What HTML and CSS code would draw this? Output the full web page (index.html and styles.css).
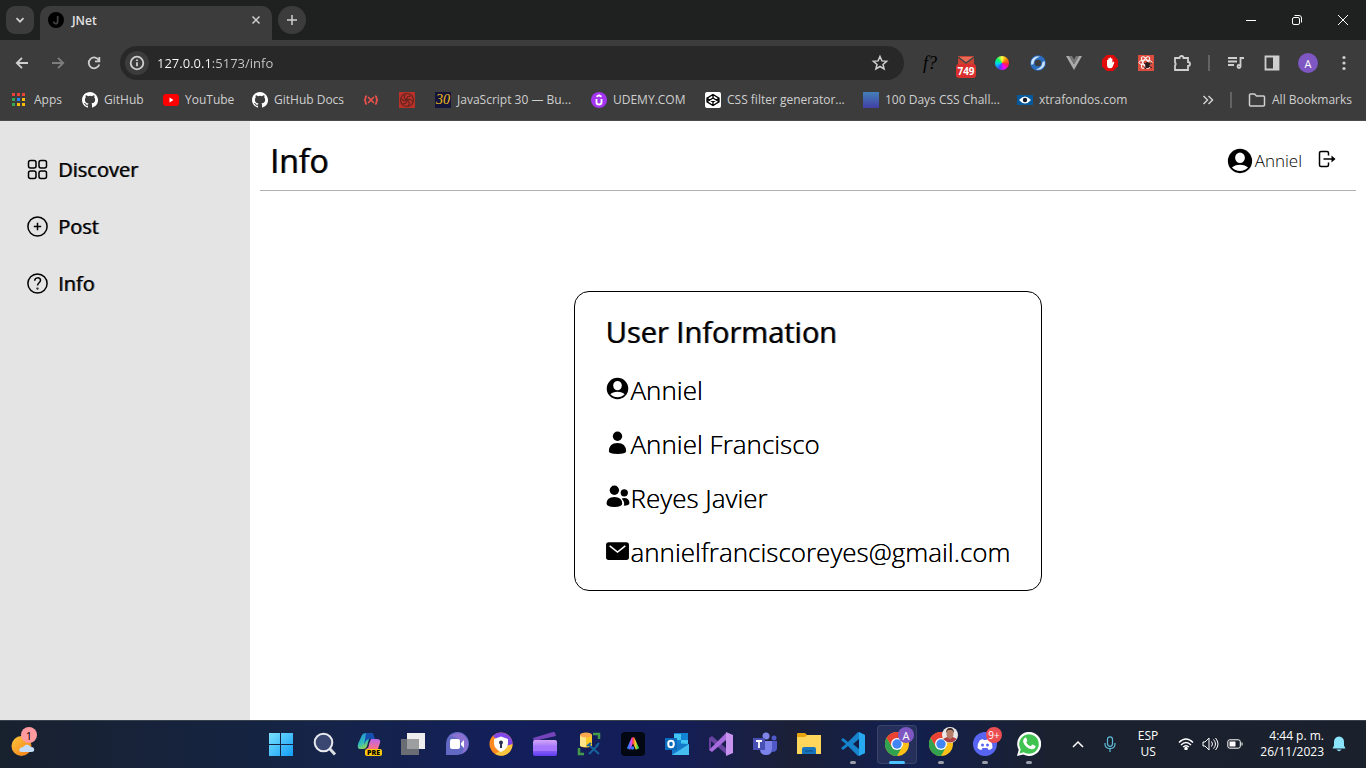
FILE: index.html
```html
<!DOCTYPE html>
<html lang="en">
<head>
<meta charset="utf-8">
<meta name="viewport" content="width=device-width, initial-scale=1">
<title>JNet</title>
<link rel="stylesheet" href="styles.css">
</head>
<body>
<header class="browser">
  <div class="tabstrip">
    <button class="tab-search" aria-label="Search tabs"><svg width="10" height="10" viewBox="0 0 10 10" class="line bold"><path d="M1.5 3.2 5 6.7l3.5-3.5"/></svg></button>
    <div class="tab">
      <svg width="16" height="16" viewBox="0 0 16 16"><circle cx="8" cy="8" r="8" fill="#000"/><path d="M9.7 4v5.4c0 3-4 3-4 .2" fill="none" stroke="#404040" stroke-width="1.8"/></svg>
      <span class="tab-title">JNet</span>
      <button class="tab-close" aria-label="Close tab"><svg width="10" height="10" viewBox="0 0 10 10" class="line"><path d="m1.5 1.5 7 7m0-7-7 7"/></svg></button>
    </div>
    <button class="new-tab" aria-label="New tab"><svg width="12" height="12" viewBox="0 0 12 12" class="line"><path d="M6 1v10M1 6h10"/></svg></button>
    <div class="window-controls">
      <button aria-label="Minimize"><svg width="12" height="12" viewBox="0 0 12 12" class="line thin"><path d="M1 6.5h10"/></svg></button>
      <button aria-label="Restore"><svg width="12" height="12" viewBox="0 0 12 12" class="line thin"><rect x="1.5" y="3.5" width="7" height="7" rx="1.5"/><path d="M3.5 1.5H8A2.5 2.5 0 0 1 10.5 4v4.500"/></svg></button>
      <button aria-label="Close"><svg width="12" height="12" viewBox="0 0 12 12" class="line thin"><path d="m1 1 10 10M11 1 1 11"/></svg></button>
    </div>
  </div>

  <div class="toolbar">
    <div class="tools">
      <button aria-label="Back"><svg width="16" height="16" viewBox="0 0 16 16" class="line bold"><path d="M14 8H3m5-5.200L2.800 8 8 13.200"/></svg></button>
      <button class="dim" aria-label="Forward"><svg width="16" height="16" viewBox="0 0 16 16" class="line bold"><path d="M2 8h11M8 2.800 13.200 8 8 13.200"/></svg></button>
      <button aria-label="Reload"><svg width="16" height="16" viewBox="0 0 16 16" class="line bold"><path d="M13 5.500A5.400 5.400 0 1 0 13.300 9.500"/><path d="M13.300 2v4.300H9"/></svg></button>
    </div>
    <div class="address">
      <button class="site-info" aria-label="Site information"><svg width="16" height="16" viewBox="0 0 16 16" class="line bold"><circle cx="8" cy="8" r="6.300"/><path d="M8 7.300v4M8 4.500v1.500"/></svg></button>
      <input class="url" type="text" aria-label="Address" value="127.0.0.1:5173/info">
      <button class="star" aria-label="Bookmark this tab"><svg width="18" height="18" viewBox="0 0 18 18" class="line"><path d="m9 2.500 1.900 4.400 4.700.4-3.600 3.100 1.100 4.600L9 12.500 4.900 15 6 10.400 2.400 7.300l4.700-.4z"/></svg></button>
    </div>
    <div class="tools">
      <button class="font-finder" aria-label="Font finder"><i>f?</i></button>
      <button class="mail" aria-label="Mail, 749 unread"><svg width="18" height="14" viewBox="0 0 18 14"><path fill="#c74332" d="M1 0h16v14H1z"/><path d="m1 1 8 6 8-6" fill="#e86a58" stroke="#444" stroke-width="1.500"/></svg><span class="mail-count">749</span></button>
      <button aria-label="Color picker"><span class="wheel"></span></button>
      <button aria-label="Sync"><svg width="16" height="16" viewBox="0 0 16 16" fill="none"><circle cx="8" cy="8" r="5.500" stroke="#2b6cbd" stroke-width="4.500"/><path d="M1.500 10A6.500 6.500 0 0 1 10 1.800Q4 3 3.500 9zM14.500 6A6.500 6.500 0 0 1 6 14.200Q12 13 12.500 7z" fill="#c9e2fb"/></svg></button>
      <button aria-label="Vue devtools"><svg width="16" height="14" viewBox="0 0 16 14"><path d="M0 0h3.200L8 8.300 12.800 0H16L8 14z" fill="#aaa"/><path d="M3.200 0H6l2 3.400L10 0h2.800L8 8.300z" fill="#777"/></svg></button>
      <button aria-label="Ad blocker"><svg width="16" height="16" viewBox="0 0 16 16"><path fill="#e30a0a" d="M4.700 0h6.600L16 4.700v6.600L11.300 16H4.700L0 11.300V4.700z"/><path fill="#fff" d="M5 5.200q.8-.8 1.300 0V3.600q.7-1 1.400 0V2.800q.7-.9 1.300 0v1q.8-.9 1.400 0v4l.9-1q1.200-.4 1 .8L10.600 12q-1 1.300-2.700 1.300C6 13.300 5 12 5 10z"/></svg></button>
      <button aria-label="React devtools"><svg width="16" height="16" viewBox="0 0 16 16"><path fill="#dc4d3d" d="M0 0h16v16H0z"/><g fill="none" stroke="#fff"><ellipse cx="7.500" cy="7.500" rx="6.500" ry="2.500"/><ellipse cx="7.500" cy="7.500" rx="6.500" ry="2.500" transform="rotate(60 7.500 7.500)"/><ellipse cx="7.500" cy="7.500" rx="6.500" ry="2.500" transform="rotate(120 7.500 7.500)"/></g><ellipse cx="9.500" cy="10" rx="2.300" ry="3" fill="#281c1b"/><path d="m6 8 8 5m-8 0 8-5M7 14l5-6" stroke="#281c1b"/></svg></button>
      <button aria-label="Extensions"><svg width="18" height="18" viewBox="0 0 18 18" class="line bold"><path d="M2 4h4.500a2 2 0 0 1 4 0H15v4a2 2 0 0 1 0 4v4H2v-4.500a2 2 0 0 0 0-3z"/></svg></button>
      <span class="divider"></span>
      <button aria-label="Media controls"><svg width="18" height="16" viewBox="0 0 18 16" class="line bold"><path d="M1 3h9M1 6.500h9M1 10h6M13.500 11.500V3H17"/><circle cx="12" cy="11.500" r="1.500"/></svg></button>
      <button aria-label="Side panel"><svg width="16" height="16" viewBox="0 0 16 16" class="line bold"><path d="M1.500 1.500h13v13h-13z"/><path d="M9 1h6v14H9z" fill="#cfcfcf" stroke="none"/></svg></button>
      <button class="profile" aria-label="Profile">A</button>
      <button aria-label="Menu"><svg width="4" height="16" viewBox="0 0 4 16" fill="#cfcfcf"><circle cx="2" cy="2.500" r="1.600"/><circle cx="2" cy="8" r="1.600"/><circle cx="2" cy="13.500" r="1.600"/></svg></button>
    </div>
  </div>

  <nav class="bookmarks" aria-label="Bookmarks">
    <a href="#" class="apps-link"><svg width="14" height="14" viewBox="0 0 14 14"><path fill="#ea4335" d="M0 0h3v3H0zM5 0h3v3H5zM10 0h3v3h-3z"/><path fill="#34a853" d="M0 5h3v3H0zM0 10h3v3H0z"/><path fill="#2684fc" d="M5 5h3v3H5z"/><path fill="#fbbc04" d="M10 5h3v3h-3zM5 10h3v3H5zM10 10h3v3h-3z"/></svg>Apps</a>
    <a href="#"><svg width="16" height="16" viewBox="0 0 16 16" fill="#fff"><path id="octocat" d="M8 0C3.580 0 0 3.580 0 8c0 3.540 2.290 6.530 5.470 7.590.4.070.55-.17.55-.38v-1.490c-2.010.37-2.530-.49-2.690-.94-.09-.23-.48-.94-.82-1.130-.28-.15-.68-.52-.01-.53.63-.01 1.080.58 1.230.82.72 1.210 1.870.87 2.330.66.07-.52.28-.87.51-1.070-1.780-.2-3.640-.89-3.640-3.950 0-.87.31-1.590.82-2.150-.08-.2-.36-1.020.08-2.120 0 0 .67-.21 2.200.82a7.600 7.600 0 0 1 4 0c1.530-1.040 2.200-.82 2.200-.82.44 1.100.16 1.920.08 2.120.51.56.82 1.270.82 2.150 0 3.070-1.870 3.750-3.650 3.950.29.25.54.73.54 1.480v2.200c0 .21.15.46.55.38A8 8 0 0 0 8 0z"/></svg>GitHub</a>
    <a href="#"><svg width="16" height="12" viewBox="0 0 16 12"><rect width="16" height="12" rx="3" fill="red"/><path fill="#fff" d="m6.500 3.500 4 2.500-4 2.500z"/></svg>YouTube</a>
    <a href="#"><svg width="16" height="16" viewBox="0 0 16 16" fill="#fff"><use href="#octocat"/></svg>GitHub Docs</a>
    <a href="#" aria-label="Regex"><svg width="16" height="12" viewBox="0 0 16 12" fill="none" stroke="#e9514d" stroke-width="1.700"><path d="M4 2Q2.500 2 2.500 4T1 6q1.500 0 1.500 2T4 10M12 2q1.500 0 1.500 2T15 6q-1.500 0-1.500 2T12 10M5 3l6 6m0-6L5 9"/></svg></a>
    <a href="#" aria-label="Swirl"><svg width="16" height="16" viewBox="0 0 16 16"><path fill="#b83229" d="M0 0h16v16H0z"/><g fill="none" stroke="#672421" stroke-width="1.200"><circle cx="8" cy="8" r="6.500"/><path d="M8 8q-4-1-2-6M8 8q-1-4 4-4M8 8q4-2 6 2M8 8q4 2 1 6M8 8q0 4-5 4M8 8Q4 10 2 6"/></g></svg></a>
    <a href="#"><span class="thirty">30</span>JavaScript 30 — Bu...</a>
    <a href="#"><svg width="16" height="16" viewBox="0 0 16 16"><circle cx="8" cy="8" r="8" fill="#a435f0"/><path d="M5.500 7v3.500q0 2 2.500 2t2.500-2V7M5.500 4.800 8 3.200l2.500 1.600" fill="none" stroke="#fff" stroke-width="1.800"/></svg>UDEMY.COM</a>
    <a href="#"><svg width="16" height="16" viewBox="0 0 16 16"><rect width="16" height="16" rx="2" fill="#fff"/><path d="m8 2.500 6 3.700v3.600l-6 3.700-6-3.700V6.200zM2 6.200l6 3.800 6-3.800M2 9.800 8 6l6 3.800M8 2.500V6m0 4v3.500" fill="none" stroke="#000" stroke-width="1.300"/></svg>CSS filter generator...</a>
    <a href="#"><span class="blue-tile"></span>100 Days CSS Chall...</a>
    <a href="#"><svg width="16" height="10" viewBox="0 0 16 10"><path fill="#06599c" d="M0 0h16v10H0z"/><path fill="#fff" d="M2 5q6-7 12 0-6 7-12 0"/><circle cx="8" cy="5" r="2.200" fill="#101828"/></svg>xtrafondos.com</a>
    <span class="spacer"></span>
    <button aria-label="More bookmarks"><svg width="12" height="10" viewBox="0 0 12 10" class="line"><path d="m1.500 1 4 4-4 4m5-8 4 4-4 4"/></svg></button>
    <span class="divider"></span>
    <a href="#"><svg width="18" height="14" viewBox="0 0 18 14" class="line"><path d="M1.500 12V2q0-1 1-1h4l2 2h7q1 0 1 1v8q0 1-1 1h-13q-1 0-1-1z"/></svg>All Bookmarks</a>
  </nav>
</header>

<div class="app">
  <nav class="sidebar" aria-label="Main">
    <a href="#"><svg width="21" height="21" viewBox="0 0 21 21" class="ink"><rect x="1.500" y="1.500" width="7.500" height="7.500" rx="2"/><rect x="12" y="1.500" width="7.500" height="7.500" rx="2"/><rect x="1.500" y="12" width="7.500" height="7.500" rx="2"/><rect x="12" y="12" width="7.500" height="7.500" rx="2"/></svg>Discover</a>
    <a href="#"><svg width="21" height="21" viewBox="0 0 21 21" class="ink"><circle cx="10.500" cy="10.500" r="9.600"/><path d="M10.500 6.800v7.400M6.800 10.500h7.400"/></svg>Post</a>
    <a href="#"><svg width="21" height="21" viewBox="0 0 21 21" class="ink"><circle cx="10.500" cy="10.500" r="9.600"/><path d="M7.700 7.700c.1-3.700 5.800-3.700 5.800-.4 0 2.400-3 2.600-3 5.300"/><circle cx="10.500" cy="15.600" r=".4"/></svg>Info</a>
  </nav>
  <main class="content">
    <header class="page-header">
      <h1>Info</h1>
      <div class="account">
        <svg width="26" height="26" viewBox="0 0 24 24"><use href="#account"/></svg>
        <span>Anniel</span>
        <button aria-label="Log out"><svg width="18" height="18" viewBox="0 0 18 18" class="ink"><path d="M10.500 5.500V3q0-1.500-1.500-1.500H3Q1.500 1.500 1.500 3v12q0 1.500 1.500 1.500h6q1.500 0 1.500-1.500v-2.500M5.500 9H16"/><path fill="#000" stroke="none" d="m13.500 5.500 4 3.500-4 3.500z"/></svg></button>
      </div>
    </header>
    <section class="card">
      <h2>User Information</h2>
      <p><svg width="25" height="25" viewBox="-1 -1 26 26"><path id="account" d="M12 .8a11.200 11.200 0 1 0 0 22.400A11.200 11.200 0 0 0 12 .8zm0 3.400a4.500 4.800 0 1 1 0 9.600 4.500 4.800 0 0 1 0-9.600zm0 17c-3 0-5.400-1-7.400-3.100 1.500-1.700 4-2.700 7.400-2.700s5.900 1 7.400 2.700C17.400 20.200 15 21.200 12 21.200z"/></svg>Anniel</p>
      <p><svg width="25" height="25" viewBox="0 0 24 24"><circle cx="12" cy="6" r="4.500"/><path d="M3.700 20.500q.2-8 8.300-8t8.300 8Q20 23 12 23t-8.300-2.500z"/></svg>Anniel Francisco</p>
      <p><svg width="25" height="25" viewBox="0 0 24 24"><circle cx="9" cy="6" r="4.500"/><circle cx="18.500" cy="8.500" r="3.500"/><path d="M1.500 19q0-6.500 7.500-6.500t7.500 6.500q0 3-7.500 3t-7.500-3zM16 13.800q7-1.500 7.500 4.500-.2 2.600-5.500 2.600 1.500-3-2-7.100z"/></svg>Reyes Javier</p>
      <p><svg width="25" height="25" viewBox="0 0 24 24"><rect x="1" y="4" width="22" height="17" rx="2.500"/><path d="m4.500 7.500 7.500 6 7.500-6" fill="none" stroke="#fff" stroke-width="1.500"/></svg>annielfranciscoreyes@gmail.com</p>
    </section>
  </main>
</div>

<footer class="taskbar">
  <div class="weather">
    <button aria-label="Widgets"><svg width="26" height="28" viewBox="0 0 26 28"><defs><linearGradient id="sun" x2="1" y2="1"><stop stop-color="#ffc83d"/><stop offset="1" stop-color="#f17b16"/></linearGradient></defs><circle cx="10.500" cy="15" r="10" fill="url(#sun)"/><path d="M10 21q-3-1-1-4 2-1 3-1 4-5 8 0 4 0 3 4-1 1-3 1z" fill="#c5dcfa"/></svg><span class="badge pink">1</span></button>
  </div>
  <div class="apps">
    <button aria-label="Start"><svg width="24" height="24" viewBox="0 0 24 24"><defs><linearGradient id="win" x2="1" y2="1"><stop stop-color="#7be2ff"/><stop offset="1" stop-color="#129cf5"/></linearGradient></defs><path fill="url(#win)" d="M0 1h11v11H0zM12 1h12v11H12zM0 13h11v11H0zM12 13h12v11H12z"/></svg></button>
    <button aria-label="Search"><svg width="24" height="24" viewBox="0 0 24 24"><path d="m17 17 5 5.500" stroke="#dadde2" stroke-width="3"/><circle cx="10.500" cy="10.500" r="8.800" fill="#3a4770" stroke="#e7e9ee" stroke-width="2"/></svg></button>
    <button aria-label="Copilot"><svg width="24" height="24" viewBox="0 0 24 24"><defs><linearGradient id="cpa" x2=".5" y2="1"><stop stop-color="#238bd8"/><stop offset=".6" stop-color="#2ebdbc"/><stop offset="1" stop-color="#a4d548"/></linearGradient><linearGradient id="cpb" x2="0" y2="1"><stop stop-color="#b965ed"/><stop offset="1" stop-color="#ff7381"/></linearGradient></defs><path fill="url(#cpa)" d="M5 3q1-2 4-2h7q-3 1-4 6l-2 7q-1 3-4 3H3q-3 0-2-5z"/><path fill="#174fb0" d="M9 1h7l2 6h-6q-3 0-5 6z"/><path fill="url(#cpb)" d="M14 7h6q4 0 3 4l-2 6H9q3-1 3-5z"/></svg><span class="pre">PRE</span></button>
    <button aria-label="Task view"><svg width="24" height="24" viewBox="0 0 24 24"><path fill="#eee" d="M6 1h18v16H6z"/><path fill="#747678" fill-opacity=".9" d="M0 7h18v16H0z"/><path fill="#9c9ea0" d="M6 7h12v10H6z"/></svg></button>
    <button aria-label="Chat"><svg width="24" height="24" viewBox="0 0 24 24"><path fill="#6269c5" d="M1 23V12A11.500 11.500 0 1 1 12 23z"/><path fill="#8b72d2" d="M12 1a11 11 0 0 1 11 11c0 6-4 9-6 10 4-8 2-15-12-18z"/><rect x="5" y="7" width="10" height="10" rx="2" fill="#fff"/><path fill="#fff" d="m16 11 3-3v8l-3-3z"/></svg></button>
    <button aria-label="Avast browser"><svg width="24" height="24" viewBox="0 0 24 24"><circle cx="12" cy="12" r="11.500" fill="#ff8b20"/><path fill="#8048e9" d="M4 4a11.500 11.500 0 0 1 19.500 8L18 17z"/><path fill="#f8c540" d="M23.500 12A11.500 11.500 0 0 1 6 22l11-8z"/><path d="m12 4.500 7 2.500v4q0 6-7 9-7-3-7-9V7z" fill="#fff"/><circle cx="12" cy="10.500" r="2" fill="#273253"/><path d="M11 11h2v5h-2z" fill="#273253"/></svg></button>
    <button aria-label="Clipchamp"><svg width="24" height="24" viewBox="0 0 24 24"><defs><linearGradient id="clip" x2="0" y2="1"><stop stop-color="#d5a5fa"/><stop offset="1" stop-color="#5f3bf3"/></linearGradient></defs><path fill="#7544bb" d="M0 6 20 0q2-1 3 4L1 9z"/><rect y="8" width="24" height="16" rx="2" fill="url(#clip)"/><path fill="#a676ff" d="M0 14h24v5H0z"/></svg></button>
    <button aria-label="Data tools"><svg width="24" height="24" viewBox="0 0 24 24"><path d="M16 2h6v5M2 16v6h5" fill="none" stroke="#459a4b" stroke-width="2.500"/><path fill="#ffc928" d="M3 3h12v11q-6 3-12 0z"/><path fill="#ffe68a" d="M3 3h6v12q-4 0-6-1z"/><ellipse cx="9" cy="3" rx="6" ry="2.500" fill="#ffa94f"/><path d="m12 13 10 9M21 13l-9 9M10 14l4-3m5 3 3-3" stroke="#16629b" stroke-width="2"/></svg></button>
    <button aria-label="Adobe Express"><svg width="24" height="24" viewBox="0 0 24 24"><defs><linearGradient id="ax"><stop stop-color="#2b7cff"/><stop offset=".3" stop-color="#d44eff"/><stop offset=".5" stop-color="#ff3b43"/><stop offset=".75" stop-color="#fecc26"/><stop offset="1" stop-color="#43d852"/></linearGradient></defs><rect width="24" height="24" rx="4" fill="#030711"/><path d="M7.500 17 12 7l4.500 10" fill="none" stroke="url(#ax)" stroke-width="3.600" stroke-linejoin="round"/><circle cx="11.500" cy="16" r="1.800" fill="#3674ff"/></svg></button>
    <button aria-label="Outlook"><svg width="24" height="24" viewBox="0 0 24 24"><path fill="#1384d4" d="M9 1h14v18H9z"/><path fill="#43c6f4" d="M9 2h7v6H9zM16 8h7v6h-7z"/><path fill="#1479c8" d="m7 11 17 1v11H7z"/><path fill="#46bdf0" d="m24 12-17 11h17z"/><path fill="#0969bd" d="M0 6h12v12H0z"/><ellipse cx="6" cy="12" rx="2.800" ry="3.200" fill="none" stroke="#fff" stroke-width="2"/></svg></button>
    <button aria-label="Visual Studio"><svg width="24" height="24" viewBox="0 0 24 24"><path fill="#6843a2" d="m0 6 3-2 15 13v6L2 9v9l-2-1z"/><path fill="#a66bdc" d="m0 18 17-17v7L3 20z"/><path fill="#c693ef" d="m17 0 7 3v18l-7 3z"/></svg></button>
    <button aria-label="Teams"><svg width="24" height="24" viewBox="0 0 24 24"><circle cx="13" cy="4" r="3.500" fill="#7f86e8"/><circle cx="21" cy="6" r="2.500" fill="#5059c9"/><path fill="#5059c9" d="M17 9h7v7q0 4-5 4z"/><path fill="#7b83eb" d="M8 9h11v8q0 6-6 6t-6-6z"/><path fill="#484fb5" d="M0 6h12v12H0z"/><path d="M3 9h6M6 9v7" stroke="#fff" stroke-width="1.800"/></svg></button>
    <button aria-label="File Explorer"><svg width="24" height="24" viewBox="0 0 24 24"><path fill="#e9a40d" d="M0 2q0-1 1-1h7l2 2v7H0z"/><path fill="#ffd65c" d="M0 5h8l2-2h14v19H0z"/><path fill="#1675bd" d="M5 22v-5q0-2 2-2h10q2 0 2 2v5z"/><path stroke="#094d82" d="M8 19h8"/></svg></button>
    <button class="running" aria-label="VS Code"><svg width="24" height="24" viewBox="0 0 24 24"><path fill="#1683cc" d="m17 0 7 3v18l-7 3L7 14l-5 4-2-2 5-4-5-4 2-2 5 4zm1 7-6 5 6 5z"/><path fill="#27a9f2" d="m18 0 6 3v18l-6 3z"/></svg></button>
    <button class="running active" aria-label="Chrome, Anniel"><svg width="24" height="24" viewBox="0 0 24 24"><g id="chrome"><circle cx="12" cy="12" r="12" fill="#fbc116"/><path fill="#e94235" d="M1.600 6A12 12 0 0 1 22.400 6H12v6l-5 3z"/><path fill="#31a350" d="M1.600 6A12 12 0 0 0 12 24l5-9H7z"/><circle cx="12" cy="12" r="6" fill="#fff"/><circle cx="12" cy="12" r="4.700" fill="#4285f4"/></g></svg><span class="badge purple">A</span></button>
    <button class="running" aria-label="Chrome, second profile"><svg width="24" height="24" viewBox="0 0 24 24"><use href="#chrome"/></svg><span class="badge photo"><svg width="16" height="16" viewBox="0 0 16 16"><circle cx="8" cy="8" r="8" fill="#e9e8e6"/><path fill="#af4043" d="M1 12q7-5 14 0-7 7-14 0z"/><ellipse cx="8" cy="7" rx="3.500" ry="5" fill="#b77f69"/><path fill="#3b2826" d="M4 6Q4 1 8 1t4 5l-2-3H6z"/></svg></span></button>
    <button class="running" aria-label="Discord, 9+ notifications"><svg width="24" height="24" viewBox="0 0 24 24"><circle cx="12" cy="12" r="12" fill="#5865f2"/><path fill="#fff" d="m7 8 3-1 .5 1h3l.5-1 3 1q3 4 2.500 8-2 2-4 2l-1-2h-5l-1 2q-2 0-4-2Q4 12 7 8z"/><circle cx="9.500" cy="13" r="1.500" fill="#5865f2"/><circle cx="14.500" cy="13" r="1.500" fill="#5865f2"/></svg><span class="badge red">9+</span></button>
    <button class="running" aria-label="WhatsApp"><svg width="24" height="24" viewBox="0 0 24 24"><path fill="#fff" d="m0 24 1.700-6.200A12 12 0 1 1 6.300 22.400z"/><path fill="#40c351" d="m2.500 21.500 1.200-4.200A9.800 9.800 0 1 1 6.700 20.300z"/><path fill="#fff" d="M7.500 6q1.500-1 2 .5l.8 2q.2.700-1 1.900 1.500 2.800 4.400 3.900l1.300-1.500q.5-.5 1.200-.1l2 1q.7.300.2 1.600-1 2.300-3.700 2-6-1-8.500-7Q5.600 7.700 7.500 6z"/></svg></button>
  </div>
  <div class="tray">
    <button aria-label="Hidden icons"><svg width="12" height="8" viewBox="0 0 12 8" class="line white"><path d="m1 7 5-5 5 5"/></svg></button>
    <button class="mic" aria-label="Microphone in use"><svg width="12" height="16" viewBox="0 0 12 16" fill="none" stroke="#60bdda" stroke-width="1.200"><rect x="3.500" y=".8" width="5" height="9.500" rx="2.500"/><path d="M1 7v1q0 4.500 5 4.500T11 8V7M6 12.500V16"/></svg></button>
    <button class="language">ESP<br>US</button>
    <button class="status" aria-label="Network, volume, battery">
      <svg width="16" height="12" viewBox="0 0 16 12" class="line white"><path d="M1 4.500q7-7 14 0M3 7q5-5 10 0M5.200 9q2.800-2.600 5.600 0"/><circle cx="8" cy="10.500" r="1" fill="#fff"/></svg>
      <svg width="17" height="14" viewBox="0 0 17 14" class="line white thin"><path d="M1 5h2l4-4v12L3 9H1zM9.500 4.500q2 2.500 0 5M11.500 2.500q4 4.500 0 9M13.500 1q5 6 0 12"/></svg>
      <svg width="16" height="10" viewBox="0 0 16 10" class="line white thin"><rect x=".8" y=".8" width="12.500" height="8.400" rx="2"/><path d="M15 3.500v3"/><path d="M2.500 2.500h6v5h-6z" fill="#fff" stroke="none"/></svg>
    </button>
    <button class="clock">4:44 p. m.<br>26/11/2023</button>
    <button aria-label="Notifications"><svg width="14" height="16" viewBox="0 0 14 16" fill="#8be4fc"><path d="M7 .5Q12 1 12 6v3.500l1.500 3H.5l1.500-3V6Q2 1 7 .5zM4.500 13.500h5q-2.500 3.500-5 0z"/></svg></button>
  </div>
</footer>
</body>
</html>
```
FILE: styles.css
```css
* { box-sizing: border-box; }

body {
  margin: 0;
  min-height: 100vh;
  display: flex;
  flex-direction: column;
  font-family: "Open Sans", "Noto Sans", sans-serif;
  background: #fff;
  color: #000;
}

button {
  display: flex;
  align-items: center;
  justify-content: center;
  padding: 0;
  border: 0;
  background: none;
  color: inherit;
  font: inherit;
}

a { color: inherit; text-decoration: none; }
svg { display: block; flex: none; }

.line { fill: none; stroke: #cfcfcf; stroke-width: 1.5; }
.line.bold { stroke-width: 1.8; }
.line.thin { stroke-width: 1; stroke: #fff; }
.line.white { stroke: #fff; }
.ink { fill: none; stroke: #000; stroke-width: 1.5; }

/* Browser frame */
.browser {
  background: #3c3c3c;
  color: #cfcfcf;
  font-size: 12px;
  border-bottom: 1px solid #4b4b4b;
}

.tabstrip {
  display: flex;
  gap: 6px;
  height: 40px;
  padding: 6px 0 0 6px;
  background: #1f2120;
}

.tab-search, .new-tab {
  width: 28px;
  height: 28px;
  border-radius: 9px;
  background: #3c3c3c;
}

.new-tab { border-radius: 50%; }

.tab {
  display: flex;
  align-items: center;
  gap: 8px;
  width: 232px;
  padding: 0 8px 6px;
  border-radius: 10px 10px 0 0;
  background: #3c3c3c;
}

.tab-title {
  flex: 1;
  color: #e3e3e3;
  font-weight: 600;
  font-size: 12px;
}

.tab-close { width: 16px; height: 16px; }

.window-controls {
  display: flex;
  margin: -6px 0 0 auto;
}

.window-controls button { width: 46px; height: 40px; }

.toolbar {
  display: flex;
  align-items: center;
  gap: 8px;
  height: 46px;
  padding: 0 4px;
}

.tools { display: flex; align-items: center; }
.tools button { position: relative; width: 36px; height: 34px; }
.tools .dim { opacity: .45; }

.divider {
  width: 2px;
  height: 16px;
  margin: 0 8px;
  background: #636363;
}

.address {
  flex: 1;
  display: flex;
  align-items: center;
  gap: 8px;
  height: 34px;
  padding: 0 15px 0 5px;
  border-radius: 17px;
  background: #282828;
}

.site-info {
  width: 24px;
  height: 24px;
  border-radius: 50%;
  background: #3c3c3c;
}

.url {
  flex: 1;
  min-width: 0;
  padding: 0;
  border: 0;
  background: linear-gradient(90deg, #fff 54px, #ccc 54px);
  background-clip: text;
  -webkit-background-clip: text;
  color: transparent;
  font: 400 13px "Open Sans", sans-serif;
}

.tools .font-finder {
  color: #000;
  font: 400 18px "Liberation Serif", serif;
}

.mail-count {
  position: absolute;
  left: 8px;
  bottom: 2px;
  width: 20px;
  border-radius: 3px;
  background: #d9302f;
  color: #fff;
  font-size: 10px;
  font-weight: 700;
  line-height: 14px;
}

.wheel {
  width: 14px;
  height: 14px;
  border-radius: 50%;
  background: conic-gradient(#ff4, #f80, #f24, #f0f, #44f, #0cf, #0f6, #ff4);
}

.tools .profile {
  width: 20px;
  height: 20px;
  margin: 0 8px;
  border-radius: 50%;
  background: #7e57c2;
  color: #fff;
  font-size: 11px;
}

.bookmarks {
  display: grid;
  grid-template-columns: 70px 81px 89px 111px 36px 36px 156px 114px 158px 154px auto 1fr 12px 34px auto;
  align-items: center;
  height: 34px;
  padding: 0 14px 7px 12px;
  white-space: nowrap;
}

.bookmarks a { display: flex; align-items: center; gap: 6px; }
.bookmarks .apps-link { gap: 8px; }
.bookmarks .divider { margin: 0 auto; }

.thirty {
  width: 16px;
  background: #15153c;
  color: #f4bd17;
  font: italic 14px/16px "Liberation Serif", serif;
  text-align: center;
}

.blue-tile {
  width: 16px;
  height: 16px;
  background: linear-gradient(#427fb8, #433fa5);
}

/* Page */
.app { flex: 1; display: flex; }

.sidebar {
  width: 250px;
  padding: 20px 27px;
  background: #e4e4e4;
  font-size: 20px;
  text-shadow: 1px 0 #0009;
}

.sidebar a {
  display: flex;
  align-items: center;
  gap: 10px;
  height: 57px;
}

.content { flex: 1; padding: 0 10px; }

.page-header {
  display: flex;
  align-items: center;
  justify-content: space-between;
  height: 70px;
  padding: 10px 20px 0 10px;
  border-bottom: 1px solid #b0b0b0;
}

h1, h2 { margin: 0; font-weight: 400; text-shadow: 1px 0 #0009; }
h1 { font-size: 32px; line-height: 44px; }

.account {
  display: flex;
  align-items: center;
  gap: 2px;
  font-size: 17px;
  font-weight: 300;
}

.account button { margin: 0 0 4px 14px; }

.card {
  width: max-content;
  margin: 100px auto 0;
  padding: 19px 30px 11px;
  border: 1px solid #000;
  border-radius: 15px;
}

h2 { margin-bottom: 10px; font-size: 29px; line-height: 42px; }

.card p {
  display: flex;
  align-items: center;
  height: 54px;
  margin: 0;
  font-size: 26px;
  font-weight: 300;
  text-shadow: 0 0 #000;
}

.card svg { margin-bottom: 3px; }

/* Taskbar */
.taskbar {
  display: flex;
  height: 48px;
  border-top: 1px solid #38424c;
  background: linear-gradient(90deg, #18212e, #152446 22%, #131f5a 37%, #141e59 49%, #1b2037 58%, #121f50 66%, #1b212e 77%, #1a202c);
  color: #fff;
  font-size: 12px;
}

.weather { flex: 1 1 11px; display: flex; padding-left: 11px; }
.weather button { position: relative; }

.apps { display: flex; }
.apps button { position: relative; width: 44px; padding-bottom: 2px; }

.running::after {
  content: "";
  position: absolute;
  left: 19px;
  bottom: 4px;
  width: 6px;
  height: 3px;
  border-radius: 2px;
  background: #999ea8;
}

.active::before {
  content: "";
  position: absolute;
  inset: 4px 2px;
  z-index: -1;
  border: 1px solid #ffffff18;
  border-radius: 4px;
  background: #ffffff14;
}

.active { z-index: 0; }
.active::after { left: 14px; width: 16px; background: #4cc2ff; }

.badge {
  position: absolute;
  top: 6px;
  right: 5px;
  display: grid;
  place-items: center;
  width: 16px;
  height: 16px;
  border-radius: 50%;
  font-size: 11px;
}

.pink { right: 0; background: #ff9ba0; color: #000; }
.purple { background: #7e57c2; }
.red { background: #eb4e52; font-size: 10px; }

.pre {
  position: absolute;
  right: 9px;
  bottom: 12px;
  padding: 0 2px;
  border-radius: 2px;
  background: #ffc90e;
  color: #000;
  font-size: 7px;
  font-weight: 800;
  line-height: 7px;
}

.tray {
  flex: 1 1 67px;
  display: flex;
  align-items: center;
  justify-content: flex-end;
  padding: 0 20px 1px 0;
  line-height: 16px;
}

.mic { margin: 0 22px 0 20px; }
.language { text-align: center; }
.status { gap: 8px; margin: 0 17px 0 20px; }
.clock { margin-right: 8px; text-align: right; }
```
